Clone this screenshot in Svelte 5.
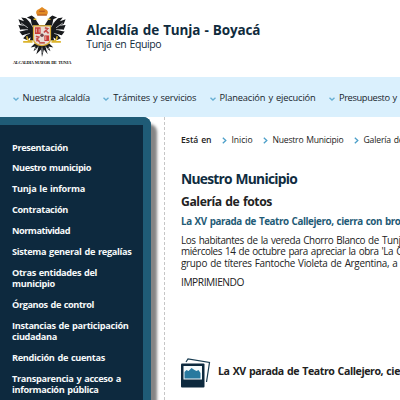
<script>
  // Spreads a line's tracking so that it occupies the given measure.
  function fit(node, width) {
    const natural = node.getBoundingClientRect().width;
    node.style.letterSpacing = (width - natural) / node.textContent.length + 'px';
  }

  const nav = [
    ['Nuestra alcaldía', 67.5],
    ['Trámites y servicios', 83],
    ['Planeación y ejecución', 96],
    ['Presupuesto y', 58]
  ];
  const menu = [
    [['Presentación', 56]],
    [['Nuestro municipio', 79]],
    [['Tunja le informa', 73]],
    [['Contratación', 56]],
    [['Normatividad', 58]],
    [['Sistema general de regalías', 119.5]],
    [['Otras entidades del', 85], ['municipio', 43]],
    [['Órganos de control', 82]],
    [['Instancias de participación', 116.5], ['ciudadana', 45]],
    [['Rendición de cuentas', 93]],
    [['Transparencia y acceso a', 109], ['información pública', 86.5]]
  ];
  const crumbs = [['Inicio', 21], ['Nuestro Municipio', 71], ['Galería de', 40]];
  const body = [
    ['Los habitantes de la vereda Chorro Blanco de Tunj', 219.5],
    ["miércoles 14 de octubre para apreciar la obra 'La C", 221],
    ['grupo de títeres Fantoche Violeta de Argentina, a', 216.5]
  ];
</script>

<div class="page">
  <header>
    <div class="crest">
      <svg width="50" height="53" viewBox="0 0 50 53">
        <g fill="#181a1d">
          <path d="M22 19 17 11 14 9 9 11 13 13 14 18 8 12 3 11 6 15 0 13 2 18 7 20 0 19 2 24 8 25 1 26 4 30 9 29 5 33 9 35 13 32 12 36 17 35 18 40 23 43 25 47 27 43 32 40 33 35 38 36 37 32 41 35 45 33 41 29 46 30 49 26 42 25 48 24 50 19 43 20 48 18 50 13 44 15 47 11 42 12 36 18 37 13 41 11 36 9 33 11 28 19Z" />
          <path d="M18 38 13 43 18 42 16 47 21 43 19 50 24 45 25 53 27 45 31 50 29 43 34 47 32 42 37 43 32 38Z" />
        </g>
        <path d="M3 17l7 5M3 24h7M6 30l6-2M47 17l-7 5M47 24h-7M44 30l-6-2M21 42l-2 5M25 43v6M29 42l2 5M11 14l5 8M39 14l-5 8M17 43l3 2M33 43l-3 2" stroke="#dfe0e2" stroke-width=".8" fill="none" />
        <path d="M9 31q0 6 6 5M41 31q0 6-6 5M5 37h10M35 37h10M16 13h3M31 13h3" stroke="#dcb42c" stroke-width="1.700" fill="none" />
        <path d="M19 7q-1-4 3-5l3-2 3 2q4 1 3 5l-1 2H20Z" fill="#e28b24" />
        <path d="M20 8.500h10M22 4.500h6" stroke="#a94b22" stroke-width="1" />
        <path d="M16 20h18v14q0 6-9 7-9-1-9-7Z" fill="#e9dcd8" stroke="#dcae36" stroke-width="1.300" />
        <path d="M17.500 21.500h6v7h-6ZM27.500 30h5v6h-5Z" fill="#cb3a38" />
        <path d="M28 22l3 1-2 2 3 3M18.500 31l3 1-2 2 3 3M27 27l2-2M19 36l2-1" stroke="#c84b48" stroke-width="1.700" fill="none" />
        <path d="M19 23v4M22 23v4M29 31v4M25 21v18M17 29.500h16" stroke="#e8dbc9" stroke-width=".8" />
        <circle cx="25" cy="30" r="1.800" fill="#6d4449" />
        <path d="M22 38h6" stroke="#bd4236" stroke-width="1.500" />
      </svg>
      <div class="motto"><span use:fit={58}>ALCALDIA MAYOR DE TUNJA</span></div>
    </div>
    <div class="brand">
      <h1><span use:fit={174}>Alcaldía de Tunja - Boyacá</span></h1>
      <p><span use:fit={75}>Tunja en Equipo</span></p>
    </div>
  </header>

  <nav>
    {#each nav as [label, w]}
      <a>
        <svg width="6" height="4" viewBox="0 0 6 4"><path d="M.5.8 3 3 5.500.8" fill="none" stroke="#67afd3" stroke-width="1.400" /></svg>
        <span use:fit={w}>{label}</span>
      </a>
    {/each}
  </nav>

  <div class="columns">
    <aside>
      <div class="panel">
        <ul>
          {#each menu as lines}
            <li>
              {#each lines as [text, w]}
                <div><span use:fit={w}>{text}</span></div>
              {/each}
            </li>
          {/each}
        </ul>
      </div>
    </aside>
    <main>
      <div class="crumbs">
        <strong><span use:fit={30.5}>Está en</span></strong>
        {#each crumbs as [text, w]}
          <svg width="5" height="7" viewBox="0 0 5 7"><path d="M.8.7 3.800 3.500.8 6.300" fill="none" stroke="#4c9fc9" stroke-width="1.300" /></svg>
          <span use:fit={w}>{text}</span>
        {/each}
      </div>
      <h2><span use:fit={116}>Nuestro Municipio</span></h2>
      <h3><span use:fit={91}>Galería de fotos</span></h3>
      <h4><span use:fit={219.5}>La XV parada de Teatro Callejero, cierra con bro</span></h4>
      <div class="body">
        {#each body as [text, w]}
          <div><span use:fit={w}>{text}</span></div>
        {/each}
      </div>
      <div class="print"><span use:fit={63}>IMPRIMIENDO</span></div>
      <div class="album">
        <svg width="30" height="30" viewBox="0 0 30 30">
          <path d="M5 4 7 1 28.500 4.500 25.500 24" fill="none" stroke="#183b50" stroke-width="1.200" />
          <rect x="0" y="5.500" width="23.500" height="24" rx="1" fill="#0d293e" />
          <rect x="2.500" y="8" width="18.500" height="13.500" fill="#f4fafc" />
          <path d="M3.500 20.500V14l2-2 2 1 3-3 3 2 2 1 2-1 2 3v5.500Z" fill="#28799f" />
        </svg>
        <span use:fit={182}>La XV parada de Teatro Callejero, cie</span>
      </div>
    </main>
  </div>
</div>

<style>
  :global(body) { background: #fff; }
  .page { width: 400px; height: 400px; overflow: hidden; font-family: "Open Sans", "Noto Sans", sans-serif; color: #222; background: #fff; white-space: nowrap; display: flex; flex-direction: column; }
  span { display: inline-block; white-space: pre; word-spacing: .8px; }
  h1, h2, h3, h4, p, ul { margin: 0; padding: 0; list-style: none; }
  header { display: flex; height: 77px; flex: none; }
  .crest { width: 58px; padding: 7px 0 0 13px; }
  .crest svg { display: block; margin-left: 5px; width: 48px; height: 50px; }
  .motto { font: bold 4.400px/6px "Liberation Serif", serif; margin-top: 3px; color: #111; }
  .brand { padding: 22px 0 0 15.300px; color: #102b3d; }
  h1 { font-size: 13.500px; line-height: 16px; font-weight: 700; }
  .brand p { font-size: 10.500px; line-height: 12px; }
  nav { display: flex; gap: 13.300px; flex: none; height: 40px; background: #daf0fd; padding-left: 12.500px; color: #17242c; font-size: 9.300px; font-weight: 500; }
  nav a { display: flex; align-items: center; height: 40px; gap: 4px; flex: none; }
  nav svg { margin-top: 3px; }
  .columns { display: flex; flex: 1; min-height: 0; }
  aside { width: 164px; flex: none; border-right: 1px dashed #c6c6c6; overflow: hidden; }
  .panel { width: 143px; height: 320px; background: #0d293e; border: solid #1f5b76; border-width: 8px 8px 0 0; border-radius: 0 8px 0 0; box-shadow: 6px 7px 3px #858585; }
  ul { padding: 16.500px 0 0 12px; color: #f6f9fa; font-size: 9.200px; line-height: 11.200px; font-weight: 700; display: flex; flex-direction: column; gap: 9.700px; }
  li div, .body div { display: flex; }
  main { padding-left: 16px; flex: none; width: 219px; }
  .crumbs { display: flex; align-items: center; height: 14px; margin-top: 15.500px; font-size: 8.600px; font-weight: 500; }
  .crumbs strong { font-weight: 600; }
  .crumbs svg { margin: 1px 5px 0 10px; flex: none; }
  h2 { font-size: 13.800px; line-height: 18px; margin-top: 23px; color: #0f2c40; }
  h3 { font-size: 12.200px; line-height: 16px; margin-top: 6.500px; }
  h4 { font-size: 9.800px; line-height: 14px; margin-top: 4.500px; color: #1f5b76; }
  .body { font-size: 9.900px; line-height: 11.300px; margin-top: 6.500px; font-weight: 500; }
  .print { font-size: 10.200px; line-height: 14px; margin-top: 6.500px; font-weight: 500; }
  .album { display: flex; align-items: center; gap: 7px; margin-top: 68.500px; font-size: 10.600px; font-weight: 700; }
  .album svg { flex: none; }
  .album span { margin-top: -3px; }
</style>
